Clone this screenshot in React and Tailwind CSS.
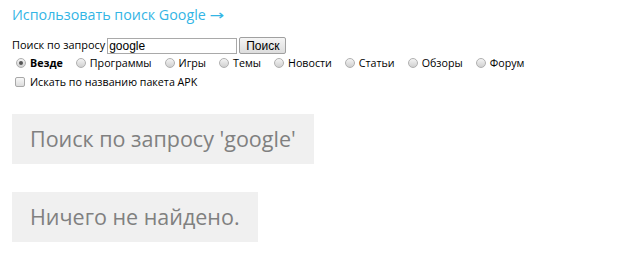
import React, { useState } from 'react';

const OPTIONS = ['Везде', 'Программы', 'Игры', 'Темы', 'Новости', 'Статьи', 'Обзоры', 'Форум'];

const Radio = ({ checked }) => (
  <span className="relative inline-block w-[10px] h-[10px] rounded-full border border-[#b0b0b0] bg-gradient-to-b from-[#f4f4f4] to-[#d0d0d0] shrink-0">
    {checked && (
      <span className="absolute left-[2px] top-[2px] w-[4px] h-[4px] rounded-full bg-[#555]" />
    )}
  </span>
);

const App = () => {
  const [query, setQuery] = useState('google');
  const [where, setWhere] = useState('Везде');

  return (
    <div className="w-[633px] h-[259px] bg-white px-[12px] pt-[5px] font-['Open_Sans',sans-serif] text-black">
      <a href="#" className="block text-[14.3px] leading-[20px] text-[#33b5e5]">
        Использовать поиск Google <span className="font-['DejaVu_Sans',sans-serif] text-[14px] inline-block scale-x-125 ml-[1px]">→</span>
      </a>

      <div className="mt-[12px] flex items-center text-[10.9px] h-[17px]">
        <span>Поиск по запросу</span>
        <input
          className="ml-[2px] w-[130px] h-[16px] border border-[#a9a9a9] px-[1px] text-[12px] font-['Liberation_Sans',sans-serif] outline-none"
          value={query}
          onChange={e => setQuery(e.target.value)}
        />
        <button className="ml-[2px] h-[17px] px-[6px] border border-[#a0a0a0] rounded-[2px] bg-gradient-to-b from-[#f5f5f5] to-[#dddddd] text-[12px] font-['Liberation_Sans',sans-serif] leading-none">
          Поиск
        </button>
      </div>

      <div className="mt-[2px] flex items-center text-[10.7px] h-[14px] pl-[4px]">
        {OPTIONS.map(o => (
          <label key={o} className="flex items-center gap-[4px] mr-[13px] cursor-pointer" onClick={() => setWhere(o)}>
            <Radio checked={where === o} />
            <span className={where === o ? 'font-bold' : ''}>{o}</span>
          </label>
        ))}
      </div>

      <label className="mt-[5px] flex items-center gap-[5px] text-[10.7px] h-[14px] pl-[3px]">
        <span className="inline-block w-[10px] h-[10px] rounded-[2px] border border-[#a8a8a8] bg-gradient-to-b from-[#f8f8f8] to-[#dcdcdc]" />
        <span>Искать по названию пакета APK</span>
      </label>

      <div className="mt-[25px] inline-block bg-[#f0f0f0] px-[18px] py-[10px] text-[21.5px] leading-[30px] text-[#808080]">
        Поиск по запросу '{query}'
      </div>
      <div />
      <div className="mt-[28px] inline-block bg-[#f0f0f0] px-[18px] py-[10px] text-[21.5px] leading-[30px] text-[#808080]">
        Ничего не найдено.
      </div>
    </div>
  );
};

export default App;
